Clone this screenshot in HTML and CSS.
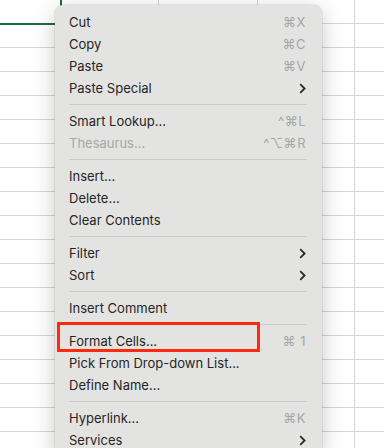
FILE: index.html
```html
<!DOCTYPE html>
<html lang="en">
<head>
  <meta charset="UTF-8">
  <meta name="viewport" content="width=device-width, initial-scale=1.0">
  <title>Context Menu</title>
  <link rel="stylesheet" href="styles.css">
</head>
<body>

<div class="sheet">
  <div class="col col-a"><div class="cell-selected"></div></div>
  <div class="col col-b"></div>
  <div class="col col-c"></div>
  <div class="col col-d"></div>
  <div class="col col-e"></div>
</div>

<div class="menu">
  <div class="item"><span>Cut</span><span class="key">⌘X</span></div>
  <div class="item"><span>Copy</span><span class="key">⌘C</span></div>
  <div class="item"><span>Paste</span><span class="key">⌘V</span></div>
  <div class="item"><span>Paste Special</span><svg class="chev" viewBox="0 0 7 11"><path d="M1.2 1.2 5.6 5.5 1.2 9.8"/></svg></div>
  <div class="sep"></div>
  <div class="item"><span>Smart Lookup...</span><span class="key">^⌘L</span></div>
  <div class="item disabled"><span>Thesaurus...</span><span class="key">^⌥⌘R</span></div>
  <div class="sep"></div>
  <div class="item"><span>Insert...</span></div>
  <div class="item"><span>Delete...</span></div>
  <div class="item"><span>Clear Contents</span></div>
  <div class="sep"></div>
  <div class="item"><span>Filter</span><svg class="chev" viewBox="0 0 7 11"><path d="M1.2 1.2 5.6 5.5 1.2 9.8"/></svg></div>
  <div class="item"><span>Sort</span><svg class="chev" viewBox="0 0 7 11"><path d="M1.2 1.2 5.6 5.5 1.2 9.8"/></svg></div>
  <div class="sep"></div>
  <div class="item"><span>Insert Comment</span></div>
  <div class="sep"></div>
  <div class="item highlighted"><span>Format Cells...</span><span class="key">⌘ 1</span></div>
  <div class="item"><span>Pick From Drop-down List...</span></div>
  <div class="item"><span>Define Name...</span></div>
  <div class="sep"></div>
  <div class="item"><span>Hyperlink...</span><span class="key">⌘K</span></div>
  <div class="item"><span>Services</span><svg class="chev" viewBox="0 0 7 11"><path d="M1.2 1.2 5.6 5.5 1.2 9.8"/></svg></div>
</div>

</body>
</html>
```

FILE: styles.css
```css
body {
  margin: 0;
  width: 384px;
  height: 448px;
  overflow: hidden;
  position: relative;
  background: #fff;
  font-family: Inter, "DejaVu Sans", sans-serif;
}
.sheet {
  display: flex;
  height: 448px;
}
.col {
  flex: none;
  height: 100%;
  border-right: 1px solid #d6d6d6;
  background: repeating-linear-gradient(to bottom, transparent 0 23px, #d6d6d6 23px 24px);
}
.col-a { width: 62px; border-right: none; }
.col-b { width: 96px; }
.col-c { width: 98px; }
.col-d { width: 96px; }
.col-e { flex: 1; border-right: none; }
.cell-selected {
  height: 23px;
  border-bottom: 2px solid #1d6b3f;
  border-right: 2px solid #1d6b3f;
  background: #fff;
}

.menu {
  position: absolute;
  left: 55px;
  top: 5px;
  width: 267px;
  padding: 6px 0;
  background: #e3e3e2;
  border-radius: 8px;
  box-shadow: 0 0 0 0.5px rgba(0,0,0,0.12), 0 6px 22px rgba(0,0,0,0.22);
  color: #262626;
  font-size: 13px;
}
.item {
  position: relative;
  height: 22px;
  display: flex;
  align-items: center;
  justify-content: space-between;
  padding: 0 16px 0 14px;
}
.item.disabled {
  color: #a8a8a8;
}
.key {
  color: #a6a6a6;
  letter-spacing: 0.5px;
}
.chev {
  width: 7px;
  height: 11px;
  fill: none;
  stroke: #2a2a2a;
  stroke-width: 1.8;
}
.sep {
  height: 11px;
  margin: 0 15px 0 14px;
  background: linear-gradient(#c9c9c9, #c9c9c9) center / 100% 1px no-repeat;
}
.highlighted::after {
  content: "";
  position: absolute;
  left: 2px;
  top: -8px;
  width: 203px;
  height: 30px;
  box-sizing: border-box;
  border: 3px solid #ff2a0e;
}
```
